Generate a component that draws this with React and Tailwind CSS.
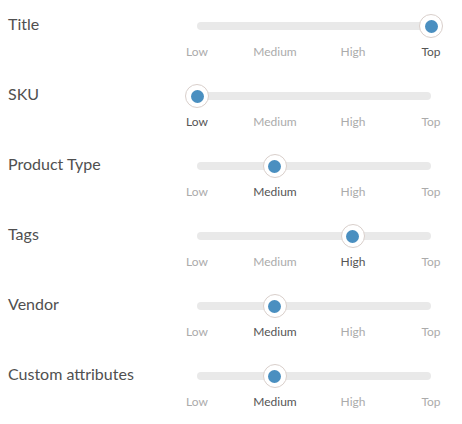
const levels = ["Low", "Medium", "High", "Top"];

const rows = [
  { label: "Title", value: 3 },
  { label: "SKU", value: 0 },
  { label: "Product Type", value: 1 },
  { label: "Tags", value: 2 },
  { label: "Vendor", value: 1 },
  { label: "Custom attributes", value: 1 },
];

function LevelSlider({ value }) {
  return (
    <div className="w-[234px]">
      <div className="relative mt-[14px] flex h-[24px] items-center">
        <div className="h-2 w-full rounded-full bg-[#e9e9e9]" />
        <div
          className="absolute top-0 flex h-[24px] w-[24px] -translate-x-1/2 items-center justify-center rounded-full border border-[#d9cfcb] bg-white"
          style={{ left: `${(value / 3) * 100}%` }}
        >
          <div className="h-[13px] w-[13px] rounded-full bg-[#4a8fc0]" />
        </div>
      </div>
      <div className="mt-[6px] flex justify-between">
        {levels.map((l, i) => (
          <div key={l} className="flex w-0 justify-center">
            <span
              className={`whitespace-nowrap text-[12px] leading-[15px] ${
                i === value ? "text-[#555555]" : "text-[#ababab]"
              }`}
            >
              {l}
            </span>
          </div>
        ))}
      </div>
    </div>
  );
}

export default function App() {
  return (
    <div className="h-[424px] w-[462px] bg-white font-['Lato',sans-serif]">
      {rows.map((r) => (
        <div key={r.label} className="flex h-[70px]">
          <div className="w-[197px] pl-[8px] pt-[13px] text-[16px] leading-[21px] text-[#505050]">
            {r.label}
          </div>
          <LevelSlider value={r.value} />
        </div>
      ))}
    </div>
  );
}
